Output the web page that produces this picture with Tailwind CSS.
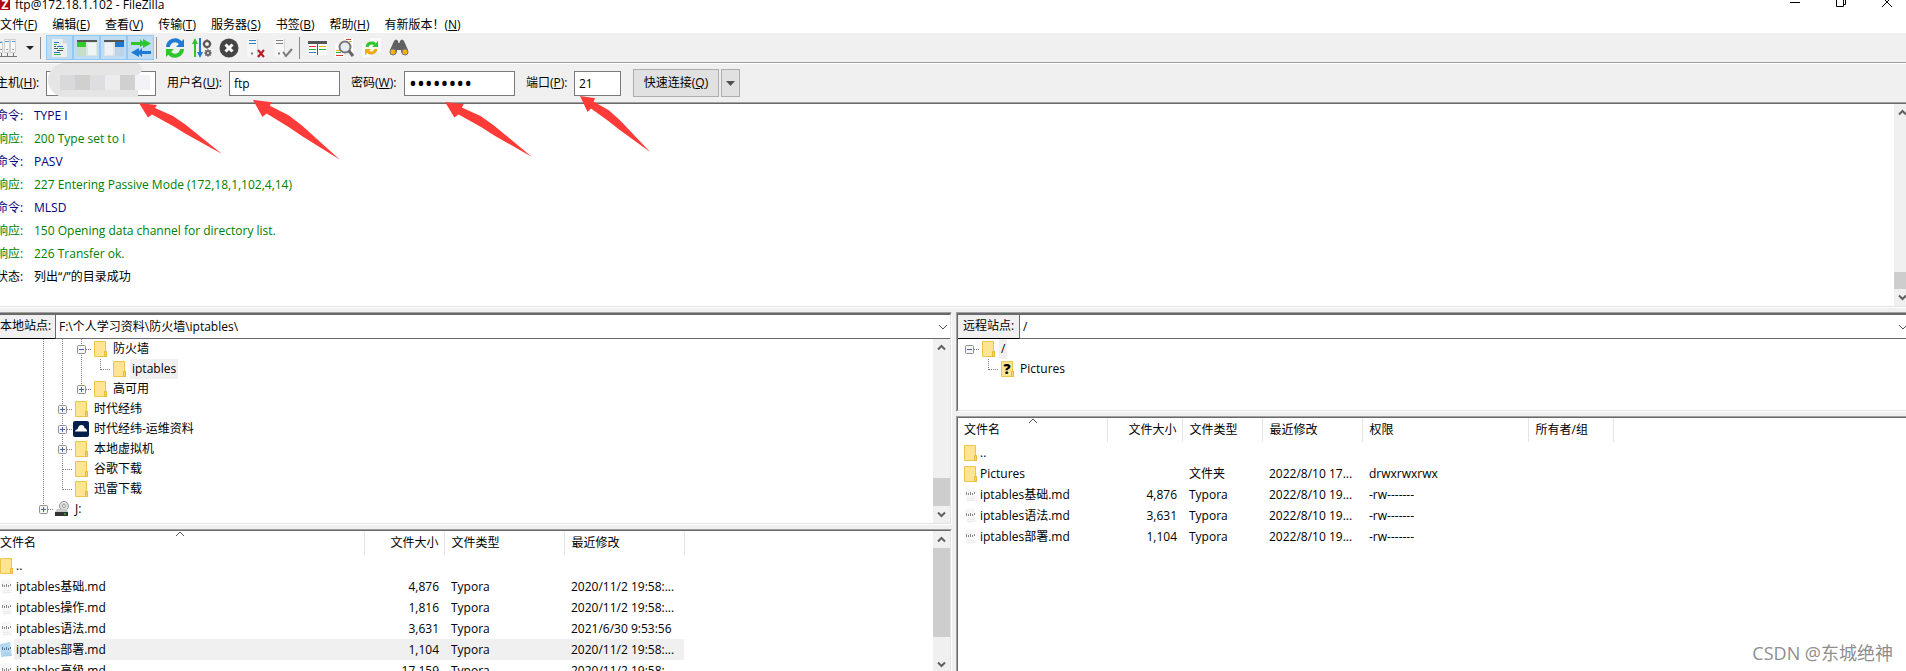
<!DOCTYPE html>
<html lang="zh-CN">

<head>
    <meta charset="UTF-8">
    <meta name="viewport" content="width=device-width, initial-scale=1.0">
    <title>ftp@172.18.1.102 - FileZilla</title>
    <script src="https://cdn.jsdelivr.net/npm/@tailwindcss/browser@4"></script>
</head>

<body class="h-screen overflow-hidden bg-white font-['Open_Sans','Noto_Sans_CJK_SC',sans-serif] text-[12px] leading-4 text-black">

    <!-- Shared icons -->
    <svg class="hidden">
        <symbol id="folder" viewBox="0 0 16 16">
            <path d="M2.500 .5h11v10h1v5h-12z" fill="#ffe493" stroke="#ecc54a" />
            <path d="M12.500 15.500v-5h2v5z" fill="#fbd768" stroke="#e8b93c" />
        </symbol>
        <symbol id="file" viewBox="0 0 16 16">
            <path d="M3 1l10-1 1 14-9 1z" fill="#f7f7f7" />
            <path d="M4.500 5v3M6.500 6v2M8.500 5v3M10.500 6v2M12.500 5v2" stroke="#8a8a8a" fill="none" />
            <path d="M5 11.500h7M5 13.500h8" stroke="#ececec" />
        </symbol>
        <symbol id="file-selected" viewBox="0 0 16 16">
            <path d="M2 2l10-2 2 14-11 1z" fill="#b4d8f0" />
            <path d="M4.500 5v3M6.500 6v2M8.500 5v3M10.500 6v2M12.500 5v2" stroke="#55789a" fill="none" />
            <path d="M5 11.500h7M5 13.500h8" stroke="#a2cce8" />
        </symbol>
        <symbol id="cloud" viewBox="0 0 16 16">
            <rect width="16" height="16" rx="2" fill="#04204a" />
            <path d="M2 10.500q0-2 2.500-2.200Q5.500 4 8.500 4q2.500 0 3 3 2.500.5 2.500 3.500z" fill="#fff" />
        </symbol>
        <symbol id="drive" viewBox="0 0 16 16">
            <circle cx="10" cy="5" r="4.500" fill="#dcdcdc" stroke="#999" />
            <circle cx="10" cy="5" r="1.500" fill="#fff" stroke="#999" />
            <path d="M3 8h10l1 3H1z" fill="#c9c9c9" />
            <path d="M1 11h13v4H1z" fill="#333" />
            <path d="M10 13h2" stroke="#3fe03f" />
        </symbol>
        <symbol id="line" viewBox="0 0 19 20">
            <path d="M9.500 0v20" stroke="#808080" stroke-dasharray="1 1" />
        </symbol>
        <symbol id="tee" viewBox="0 0 19 20">
            <path d="M9.500 0v20M10 10.500h9" stroke="#808080" stroke-dasharray="1 1" fill="none" />
        </symbol>
        <symbol id="end" viewBox="0 0 19 20">
            <path d="M9.500 0v11M10 10.500h9" stroke="#808080" stroke-dasharray="1 1" fill="none" />
        </symbol>
        <symbol id="minus" viewBox="0 0 19 20">
            <path d="M14 10.500h5" stroke="#808080" stroke-dasharray="1 1" />
            <rect x="5.500" y="6.500" width="8" height="8" rx="1" fill="#f5f5f5" stroke="#919191" />
            <path d="M7 10.500h5" stroke="#4b63a7" />
        </symbol>
        <symbol id="plus" viewBox="0 0 19 20">
            <path d="M14 10.500h5" stroke="#808080" stroke-dasharray="1 1" />
            <rect x="5.500" y="6.500" width="8" height="8" rx="1" fill="#f5f5f5" stroke="#919191" />
            <path d="M7 10.500h5M9.500 8v5" stroke="#4b63a7" />
        </symbol>
        <symbol id="up" viewBox="0 0 17 17">
            <path d="M5 10.500l3.500-3.500 3.500 3.500" stroke="#606060" stroke-width="2" fill="none" />
        </symbol>
        <symbol id="down" viewBox="0 0 17 17">
            <path d="M5 6.500l3.500 3.500 3.500-3.500" stroke="#606060" stroke-width="2" fill="none" />
        </symbol>
        <symbol id="caret" viewBox="0 0 10 6">
            <path d="M1 1l4 4 4-4" stroke="#555" fill="none" />
        </symbol>
        <symbol id="arrow" viewBox="0 0 84 52" preserveAspectRatio="none">
            <path d="M0 0L18 2l-2 3 18 8 13 9 36 29-36-20-13-8-21-11.500-4 3z" fill="#fe3b38" />
        </symbol>
    </svg>

    <div class="-mt-[3px] -mr-[5px] flex h-[calc(100vh+5px)] flex-col bg-[#f0f0f0]">

        <!-- Title bar -->
        <header class="flex h-[17px] shrink-0 items-start justify-between bg-white">
            <div class="flex items-start">
                <span class="h-[13px] w-[10px] bg-[#b00610] text-center text-[12px] leading-[15px] font-bold text-white">Z</span>
                <h1 class="pl-[5px] leading-4">ftp@172.18.1.102 - FileZilla</h1>
            </div>
            <div class="flex gap-[34px] pr-[18px]">
                <button aria-label="最小化"><svg class="h-3 w-3" viewBox="0 0 12 12"><path d="M1 5.500h10" stroke="#000" /></svg></button>
                <button aria-label="还原"><svg class="h-3 w-3" viewBox="0 0 12 12"><path d="M1.500 1.500h7v8h-7zM10.500 0v7.500h-2" stroke="#000" fill="none" /></svg></button>
                <button aria-label="关闭"><svg class="h-3 w-3" viewBox="0 0 12 12"><path d="M1 0l10 10M11 0L1 10" stroke="#000" fill="none" /></svg></button>
            </div>
        </header>

        <!-- Menu -->
        <nav class="flex h-[19px] shrink-0 items-center gap-[15px] bg-white pt-[3px]">
            <button>文件(<u>F</u>)</button>
            <button>编辑(<u>E</u>)</button>
            <button>查看(<u>V</u>)</button>
            <button>传输(<u>T</u>)</button>
            <button>服务器(<u>S</u>)</button>
            <button>书签(<u>B</u>)</button>
            <button>帮助(<u>H</u>)</button>
            <button>有新版本！(<u>N</u>)</button>
        </nav>

        <!-- Toolbar -->
        <div class="flex h-[30px] shrink-0 items-center border-b border-[#a0a0a0]">
            <button class="flex items-center gap-2" aria-label="站点管理器">
                <svg class="h-5 w-[18px]" viewBox="0 0 18 20">
                    <path d="M-2.500 3.500h5v11h-5zM4.500 1.500h5v13h-5zM10.500 1.500h5v13h-5z" fill="#f8f8f8" stroke="#cfcfcf" />
                    <path d="M0 4.500h2M5 3.500h4M12 3.500h3" stroke="#4a9ee0" />
                    <path d="M0 11.500h2M6 11.500h2M12 11.500h2" stroke="#999" />
                    <path d="M1.500 15v3M7.500 15v3M13.500 15v3M0 18.500h17" stroke="#777" />
                </svg>
                <svg class="h-1 w-2" viewBox="0 0 8 4"><path d="M0 0h8L4 4z" fill="#222" /></svg>
            </button>
            <span class="mr-[5px] ml-[6px] h-[22px] w-px bg-[#8a8a8a]"></span>
            <div class="flex">
                <button class="flex h-[25px] w-[27px] items-center justify-center border border-[#90c8f6] bg-[#c0dcf3]" aria-label="消息日志">
                    <svg class="h-5 w-5" viewBox="0 0 20 20">
                        <path d="M2 1h11l4 4v14H2z" fill="#eceff1" />
                        <path d="M13 1v4h4z" fill="#cfd6da" />
                        <path d="M4 4.500h5M7 8.500h6M4 14.500h6" stroke="#1a78c8" />
                        <path d="M4 6.500h3M9 10.500h5M4 16.500h7" stroke="#36b34a" />
                        <path d="M4 8.500h2M4 10.500h4M7 12.500h6" stroke="#555" />
                    </svg>
                </button>
                <button class="flex h-[25px] w-[27px] items-center justify-center border border-[#90c8f6] bg-[#c0dcf3]" aria-label="本地目录树">
                    <svg class="h-5 w-5" viewBox="0 0 20 20">
                        <path d="M0 2h20v16H0z" fill="#dce8e2" />
                        <path d="M0 2h20v2H0z" fill="#555" />
                        <path d="M0 4h9v5H0z" fill="#2fcc2f" />
                        <path d="M0 9h9v9H0z" fill="#c5dec8" />
                        <path d="M11 5h8v12h-8z" fill="#f0f4f4" />
                    </svg>
                </button>
                <button class="flex h-[25px] w-[27px] items-center justify-center border border-[#90c8f6] bg-[#c0dcf3]" aria-label="远程目录树">
                    <svg class="h-5 w-5" viewBox="0 0 20 20">
                        <path d="M0 2h20v16H0z" fill="#dce4ea" />
                        <path d="M0 2h20v2H0z" fill="#555" />
                        <path d="M11 4h9v5h-9z" fill="#1d78cf" />
                        <path d="M11 9h9v9h-9z" fill="#bed2e8" />
                        <path d="M1 5h8v12H1z" fill="#eef2f5" />
                    </svg>
                </button>
                <button class="flex h-[25px] w-[27px] items-center justify-center border border-[#90c8f6] bg-[#c0dcf3]" aria-label="传输队列">
                    <svg class="h-5 w-5" viewBox="0 0 20 20">
                        <path d="M0 4h9V1l3 3V1l8 4.500-8 4.500V7L9 9V7H0z" fill="#2dc62d" />
                        <path d="M20 13h-9v-3l-3 3v-3l-8 4.500L8 19v-3l3 3v-3h9z" fill="#1d7bd6" />
                    </svg>
                </button>
            </div>
            <span class="mr-2 ml-[2px] h-[22px] w-px bg-[#8a8a8a]"></span>
            <div class="flex gap-[7px]">
                <button aria-label="刷新">
                    <svg class="h-5 w-5" viewBox="0 0 20 20">
                        <path d="M3 9a7 7 0 0 1 12.500-4" stroke="#1d7bd6" stroke-width="4" fill="none" />
                        <path d="M19 1v8h-8z" fill="#1d7bd6" />
                        <path d="M17 11A7 7 0 0 1 4.500 15" stroke="#2dc62d" stroke-width="4" fill="none" />
                        <path d="M1 19v-8h8z" fill="#2dc62d" />
                    </svg>
                </button>
                <button aria-label="处理队列">
                    <svg class="h-5 w-5" viewBox="0 0 20 20">
                        <path d="M3 19V4" stroke="#2dc62d" stroke-width="2" />
                        <path d="M0 6l3-6 3 6z" fill="#2dc62d" />
                        <path d="M8 0v16" stroke="#1d7bd6" stroke-width="2" />
                        <path d="M5 14l3 6 3-6z" fill="#1d7bd6" />
                        <circle cx="15" cy="6" r="3" fill="none" stroke="#555" stroke-width="2" />
                        <path d="M15 1v10M10.500 6h9M12 3l6 6M18 3l-6 6" stroke="#555" stroke-dasharray="2 5 3" />
                        <circle cx="16" cy="15" r="2" fill="none" stroke="#666" stroke-width="2" />
                        <path d="M16 11v8M12 15h8M13 12l6 6M19 12l-6 6" stroke="#666" stroke-dasharray="2 4 2" />
                    </svg>
                </button>
                <button aria-label="取消">
                    <svg class="h-5 w-5" viewBox="0 0 20 20">
                        <circle cx="10" cy="10" r="9.500" fill="#454545" />
                        <path d="M6.500 6.500l7 7M13.500 6.500l-7 7" stroke="#fff" stroke-width="3" />
                    </svg>
                </button>
                <button aria-label="断开连接">
                    <svg class="h-5 w-5" viewBox="0 0 20 20">
                        <path d="M1 1h10v18H1z" fill="#f6f6f6" />
                        <path d="M11.500 1v18" stroke="#d6d6d6" />
                        <path d="M3 2.500h7M3 5.500h7" stroke="#2d7fd0" />
                        <path d="M5 15.500h2" stroke="#777" stroke-width="2" />
                        <path d="M12 12l6 7M18 12l-6 7" stroke="#b81822" stroke-width="2" />
                    </svg>
                </button>
                <button aria-label="重新连接">
                    <svg class="h-5 w-5" viewBox="0 0 20 20">
                        <path d="M1 1h10v18H1z" fill="#f6f6f6" />
                        <path d="M11.500 1v18" stroke="#d6d6d6" />
                        <path d="M3 2.500h7M3 5.500h7" stroke="#808080" />
                        <path d="M5 15.500h2" stroke="#808080" stroke-width="2" />
                        <path d="M10 14l3 4 6-7" stroke="#7c7c7c" stroke-width="2" fill="none" />
                    </svg>
                </button>
            </div>
            <span class="mr-2 ml-[6px] h-[22px] w-px bg-[#8a8a8a]"></span>
            <div class="flex gap-[7px]">
                <button aria-label="目录列表过滤器">
                    <svg class="h-5 w-5" viewBox="0 0 20 20">
                        <path d="M1 4h18v13H1z" fill="#fff" />
                        <path d="M0 3h19v3H0z" fill="#555" />
                        <path d="M1 8.500h7" stroke="#e0342c" />
                        <path d="M1 11.500h7M11 11.500h7" stroke="#26b326" />
                        <path d="M11 8.500h7" stroke="#f0b000" />
                        <path d="M1 14.500h7" stroke="#2d7fd0" />
                        <path d="M9.500 6v11" stroke="#555" />
                    </svg>
                </button>
                <button aria-label="目录对比">
                    <svg class="h-5 w-5" viewBox="0 0 20 20">
                        <path d="M9 0h9v14H9zM0 6h9v13H0z" fill="#fff" />
                        <path d="M11 1.500h5" stroke="#d8342c" />
                        <path d="M14 3.500h3" stroke="#e8b000" />
                        <path d="M1 12.500h4" stroke="#e8b000" />
                        <path d="M1 14.500h5" stroke="#2faf2f" />
                        <path d="M1 17.500h7" stroke="#e0342c" />
                        <circle cx="10" cy="9" r="5.500" fill="#e6edf0" stroke="#777" stroke-width="2" />
                        <path d="M14 13l4 5" stroke="#666" stroke-width="3" />
                    </svg>
                </button>
                <button aria-label="同步浏览">
                    <svg class="h-5 w-5" viewBox="0 0 20 20">
                        <path d="M8 0h11v14H8zM0 6h9v13H0z" fill="#fafafa" />
                        <path d="M5 9a5 5 0 0 1 8-3" stroke="#2dc62d" stroke-width="3" fill="none" />
                        <path d="M16 3v6h-6z" fill="#2dc62d" />
                        <path d="M14 11a5 5 0 0 1-8 3" stroke="#f3a80c" stroke-width="3" fill="none" />
                        <path d="M3 17v-6h6z" fill="#f3a80c" />
                    </svg>
                </button>
                <button aria-label="查找文件">
                    <svg class="h-5 w-5" viewBox="0 0 20 20">
                        <path d="M5 3q2-3 4 0l.5 2h1L11 3q2-3 4 0l4 9q1 5-3 5-4 0-4-5h-4q0 5-4 5-4 0-3-5z" fill="#606060" />
                        <circle cx="4" cy="14" r="3" fill="#f7b212" stroke="#777" />
                        <circle cx="16" cy="14" r="3" fill="#f7b212" stroke="#777" />
                    </svg>
                </button>
            </div>
        </div>

        <!-- Quickconnect -->
        <form class="flex h-[39px] shrink-0 items-center border-t border-white">
            <label for="host" class="-ml-1 w-[50px] shrink-0">主机(<u>H</u>):</label>
            <div class="relative">
                <input id="host" type="text" class="block h-[25px] w-[110px] border border-[#7a7a7a] bg-white px-1">
                <!-- hidden host name -->
                <div class="absolute -top-2 left-[2px] h-[34px] w-[90px] rounded-l-full rounded-br-2xl bg-[#e5e5e5]">
                    <div class="absolute top-0 left-4 h-3 w-[78px] rounded-r-full bg-[#e5e5e5]"></div>
                    <div class="absolute top-3 left-3 flex">
                        <i class="h-[15px] w-[15px] bg-[#d9d9dc]"></i>
                        <i class="h-[15px] w-[15px] bg-[#d2d0cf]"></i>
                        <i class="h-[15px] w-[15px] bg-[#dedee0]"></i>
                        <i class="h-[15px] w-[15px] bg-[#ececef]"></i>
                        <i class="h-[15px] w-[15px] bg-[#d0d0d1]"></i>
                        <i class="h-[15px] w-[15px] bg-[#f2f3f7]"></i>
                    </div>
                </div>
            </div>
            <label for="user" class="ml-[11px] w-[62px] shrink-0">用户名(<u>U</u>):</label>
            <input id="user" type="text" value="ftp" class="h-[25px] w-[111px] border border-[#7a7a7a] bg-white px-1">
            <label for="pass" class="ml-[11px] w-[53px] shrink-0">密码(<u>W</u>):</label>
            <input id="pass" type="password" value="password" class="h-[25px] w-[111px] border border-[#7a7a7a] bg-white px-1 text-[21px]">
            <label for="port" class="ml-[11px] w-[48px] shrink-0">端口(<u>P</u>):</label>
            <input id="port" type="text" value="21" class="h-[25px] w-[47px] border border-[#7a7a7a] bg-white px-1">
            <button type="button" class="ml-3 h-[28px] w-[86px] border border-[#adadad] bg-[#e1e1e1]">快速连接(<u>Q</u>)</button>
            <button type="button" class="ml-[2px] flex h-[28px] w-[19px] items-center justify-center border border-[#adadad] bg-[#e1e1e1]" aria-label="历史">
                <svg class="h-[5px] w-[9px]" viewBox="0 0 9 5"><path d="M0 0h9L4.500 5z" fill="#505050" /></svg>
            </button>
        </form>

        <!-- Message log -->
        <section class="flex shrink-0 border-t border-b border-t-[#a0a0a0] border-b-white">
            <div class="flex flex-1 border-t border-b border-t-[#696969] border-b-[#e3e3e3] bg-white">
                <div class="-ml-1 flex-1 pb-[18px] leading-[23px]">
                    <p class="flex text-[#000080]"><span class="w-[38px]">命令:</span>TYPE I</p>
                    <p class="flex text-[#008000]"><span class="w-[38px]">响应:</span>200 Type set to I</p>
                    <p class="flex text-[#000080]"><span class="w-[38px]">命令:</span>PASV</p>
                    <p class="flex text-[#008000]"><span class="w-[38px]">响应:</span>227 Entering Passive Mode (172,18,1,102,4,14)</p>
                    <p class="flex text-[#000080]"><span class="w-[38px]">命令:</span>MLSD</p>
                    <p class="flex text-[#008000]"><span class="w-[38px]">响应:</span>150 Opening data channel for directory list.</p>
                    <p class="flex text-[#008000]"><span class="w-[38px]">响应:</span>226 Transfer ok.</p>
                    <p class="flex"><span class="w-[38px]">状态:</span>列出“/”的目录成功</p>
                </div>
                <div class="flex w-[17px] flex-col justify-between bg-[#f0f0f0]">
                    <svg class="h-[17px] w-[17px]"><use href="#up" /></svg>
                    <div>
                        <div class="h-[17px] bg-[#cdcdcd]"></div>
                        <svg class="h-[17px] w-[17px]"><use href="#down" /></svg>
                    </div>
                </div>
            </div>
        </section>

        <main class="mt-1 grid min-h-0 flex-1 grid-cols-[952fr_955fr] gap-1">

            <!-- Local site -->
            <section class="flex min-h-0 flex-col gap-1">
                <div class="border-t border-r border-b border-t-[#a0a0a0] border-r-white border-b-white">
                    <div class="border-t-2 border-r border-b border-t-[#696969] border-r-[#e3e3e3] border-b-[#e3e3e3] bg-white">
                        <div class="flex h-6">
                            <label for="local" class="w-14 border-r border-b border-r-[#696969] border-b-black bg-[#f0f0f0] leading-[22px]">本地站点:</label>
                            <div class="relative flex-1 border-b border-[#696969]">
                                <select id="local" class="h-full w-full appearance-none pl-[3px]">
                                    <option>F:\个人学习资料\防火墙\iptables\</option>
                                </select>
                                <svg class="pointer-events-none absolute top-[9px] right-[2px] h-[6px] w-[10px]"><use href="#caret" /></svg>
                            </div>
                        </div>
                        <div class="flex h-[184px] overflow-hidden">
                            <ul class="flex-1 pl-[34px] leading-5">
                                <li class="flex items-center">
                                    <svg class="h-5 w-[19px]"><use href="#line" /></svg>
                                    <svg class="h-5 w-[19px]"><use href="#line" /></svg>
                                    <svg class="h-5 w-[19px]"><use href="#line" /><use href="#minus" /></svg>
                                    <svg class="mr-[3px] ml-px h-4 w-4"><use href="#folder" /></svg>
                                    <span class="px-[2px]">防火墙</span>
                                </li>
                                <li class="flex items-center">
                                    <svg class="h-5 w-[19px]"><use href="#line" /></svg>
                                    <svg class="h-5 w-[19px]"><use href="#line" /></svg>
                                    <svg class="h-5 w-[19px]"><use href="#line" /></svg>
                                    <svg class="h-5 w-[19px]"><use href="#end" /></svg>
                                    <svg class="mr-[3px] ml-px h-4 w-4"><use href="#folder" /></svg>
                                    <span class="bg-[#f0f0f0] px-[2px]">iptables</span>
                                </li>
                                <li class="flex items-center">
                                    <svg class="h-5 w-[19px]"><use href="#line" /></svg>
                                    <svg class="h-5 w-[19px]"><use href="#line" /></svg>
                                    <svg class="h-5 w-[19px]"><use href="#end" /><use href="#plus" /></svg>
                                    <svg class="mr-[3px] ml-px h-4 w-4"><use href="#folder" /></svg>
                                    <span class="px-[2px]">高可用</span>
                                </li>
                                <li class="flex items-center">
                                    <svg class="h-5 w-[19px]"><use href="#line" /></svg>
                                    <svg class="h-5 w-[19px]"><use href="#line" /><use href="#plus" /></svg>
                                    <svg class="mr-[3px] ml-px h-4 w-4"><use href="#folder" /></svg>
                                    <span class="px-[2px]">时代经纬</span>
                                </li>
                                <li class="flex items-center">
                                    <svg class="h-5 w-[19px]"><use href="#line" /></svg>
                                    <svg class="h-5 w-[19px]"><use href="#line" /><use href="#plus" /></svg>
                                    <svg class="mr-[3px] ml-px h-4 w-4"><use href="#cloud" /></svg>
                                    <span class="px-[2px]">时代经纬-运维资料</span>
                                </li>
                                <li class="flex items-center">
                                    <svg class="h-5 w-[19px]"><use href="#line" /></svg>
                                    <svg class="h-5 w-[19px]"><use href="#line" /><use href="#plus" /></svg>
                                    <svg class="mr-[3px] ml-px h-4 w-4"><use href="#folder" /></svg>
                                    <span class="px-[2px]">本地虚拟机</span>
                                </li>
                                <li class="flex items-center">
                                    <svg class="h-5 w-[19px]"><use href="#line" /></svg>
                                    <svg class="h-5 w-[19px]"><use href="#tee" /></svg>
                                    <svg class="mr-[3px] ml-px h-4 w-4"><use href="#folder" /></svg>
                                    <span class="px-[2px]">谷歌下载</span>
                                </li>
                                <li class="flex items-center">
                                    <svg class="h-5 w-[19px]"><use href="#line" /></svg>
                                    <svg class="h-5 w-[19px]"><use href="#end" /></svg>
                                    <svg class="mr-[3px] ml-px h-4 w-4"><use href="#folder" /></svg>
                                    <span class="px-[2px]">迅雷下载</span>
                                </li>
                                <li class="flex items-center">
                                    <svg class="h-5 w-[19px]"><use href="#end" /><use href="#plus" /></svg>
                                    <svg class="mr-[3px] ml-px h-4 w-4"><use href="#drive" /></svg>
                                    <span class="px-[2px]">J:</span>
                                </li>
                            </ul>
                            <div class="flex w-[17px] flex-col justify-between bg-[#f0f0f0]">
                                <svg class="h-[17px] w-[17px]"><use href="#up" /></svg>
                                <div>
                                    <div class="h-7 bg-[#cdcdcd]"></div>
                                    <svg class="h-[17px] w-[17px]"><use href="#down" /></svg>
                                </div>
                            </div>
                        </div>
                    </div>
                </div>

                <div class="flex min-h-0 flex-1 border-t border-r border-t-[#a0a0a0] border-r-white">
                    <div class="flex min-h-0 flex-1 border-t border-r border-t-[#696969] border-r-[#e3e3e3] bg-white">
                        <div class="flex-1 overflow-hidden">
                            <table class="w-[684px] table-fixed">
                                <colgroup>
                                    <col class="w-[364px]">
                                    <col class="w-[80px]">
                                    <col class="w-[120px]">
                                    <col class="w-[120px]">
                                </colgroup>
                                <thead>
                                    <tr class="h-6 text-left">
                                        <th class="relative border-r border-[#e5e5e5] font-normal">
                                            文件名
                                            <svg class="absolute top-0 left-[175px] h-[6px] w-[10px] rotate-180"><use href="#caret" /></svg>
                                        </th>
                                        <th class="border-r border-[#e5e5e5] pr-[5px] text-right font-normal">文件大小</th>
                                        <th class="border-r border-[#e5e5e5] pl-[7px] font-normal">文件类型</th>
                                        <th class="border-r border-[#e5e5e5] pl-[7px] font-normal">最近修改</th>
                                    </tr>
                                </thead>
                                <tbody>
                                    <tr class="h-[21px]">
                                        <td><div class="flex items-center"><svg class="-ml-[2px] mr-[2px] h-4 w-4"><use href="#folder" /></svg>..</div></td>
                                        <td></td>
                                        <td></td>
                                        <td></td>
                                    </tr>
                                    <tr class="h-[21px]">
                                        <td><div class="flex items-center"><svg class="-ml-[2px] mr-[2px] h-4 w-4"><use href="#file" /></svg>iptables基础.md</div></td>
                                        <td class="pr-[5px] text-right">4,876</td>
                                        <td class="pl-[7px]">Typora</td>
                                        <td class="pl-[7px]">2020/11/2 19:58:...</td>
                                    </tr>
                                    <tr class="h-[21px]">
                                        <td><div class="flex items-center"><svg class="-ml-[2px] mr-[2px] h-4 w-4"><use href="#file" /></svg>iptables操作.md</div></td>
                                        <td class="pr-[5px] text-right">1,816</td>
                                        <td class="pl-[7px]">Typora</td>
                                        <td class="pl-[7px]">2020/11/2 19:58:...</td>
                                    </tr>
                                    <tr class="h-[21px]">
                                        <td><div class="flex items-center"><svg class="-ml-[2px] mr-[2px] h-4 w-4"><use href="#file" /></svg>iptables语法.md</div></td>
                                        <td class="pr-[5px] text-right">3,631</td>
                                        <td class="pl-[7px]">Typora</td>
                                        <td class="pl-[7px]">2021/6/30 9:53:56</td>
                                    </tr>
                                    <tr class="h-[21px] bg-[#f0f0f0]">
                                        <td>
                                            <div class="flex h-[21px] items-center">
                                                <span class="flex h-full w-[14px] items-center bg-white"><svg class="-ml-[2px] h-4 w-4 shrink-0"><use href="#file-selected" /></svg></span>
                                                <span class="pl-[2px]">iptables部署.md</span>
                                            </div>
                                        </td>
                                        <td class="pr-[5px] text-right">1,104</td>
                                        <td class="pl-[7px]">Typora</td>
                                        <td class="pl-[7px]">2020/11/2 19:58:...</td>
                                    </tr>
                                    <tr class="h-[21px]">
                                        <td><div class="flex items-center"><svg class="-ml-[2px] mr-[2px] h-4 w-4"><use href="#file" /></svg>iptables高级.md</div></td>
                                        <td class="pr-[5px] text-right">17,159</td>
                                        <td class="pl-[7px]">Typora</td>
                                        <td class="pl-[7px]">2020/11/2 19:58:...</td>
                                    </tr>
                                </tbody>
                            </table>
                        </div>
                        <div class="flex w-[17px] flex-col justify-between bg-[#f0f0f0]">
                            <div>
                                <svg class="h-[17px] w-[17px]"><use href="#up" /></svg>
                                <div class="h-[89px] bg-[#cdcdcd]"></div>
                            </div>
                            <svg class="h-[17px] w-[17px]"><use href="#down" /></svg>
                        </div>
                    </div>
                </div>
            </section>

            <!-- Remote site -->
            <section class="flex min-h-0 flex-col gap-1">
                <div class="border-t border-b border-l border-t-[#a0a0a0] border-b-white border-l-[#a0a0a0]">
                    <div class="border-t-2 border-b border-l border-t-[#696969] border-b-[#e3e3e3] border-l-[#696969] bg-white">
                        <div class="flex h-6">
                            <label for="remote" class="w-[62px] border-r border-b border-r-[#696969] border-b-black bg-[#f0f0f0] pl-[5px] leading-[22px]">远程站点:</label>
                            <div class="relative flex-1 border-b border-[#696969]">
                                <select id="remote" class="h-full w-full appearance-none pl-[3px]">
                                    <option>/</option>
                                </select>
                                <svg class="pointer-events-none absolute top-[9px] right-[3px] h-[6px] w-[10px]"><use href="#caret" /></svg>
                            </div>
                        </div>
                        <ul class="h-[71px] pl-[2px] leading-5">
                            <li class="flex items-center">
                                <svg class="h-5 w-[19px]"><use href="#minus" /></svg>
                                <svg class="mr-[3px] ml-px h-4 w-4"><use href="#folder" /></svg>
                                <span class="bg-[#f0f0f0] px-[2px]">/</span>
                            </li>
                            <li class="flex items-center pl-[19px]">
                                <svg class="h-5 w-[19px]"><use href="#end" /></svg>
                                <span class="relative mr-[3px] ml-px h-4 w-4 text-center text-[14px] leading-4 font-extrabold">
                                    <svg class="absolute inset-0 h-4 w-4"><use href="#folder" /></svg>
                                    <span class="relative">?</span>
                                </span>
                                <span class="px-[2px]">Pictures</span>
                            </li>
                        </ul>
                    </div>
                </div>

                <div class="flex min-h-0 flex-1 border-t border-l border-[#a0a0a0]">
                    <div class="min-h-0 flex-1 overflow-hidden border-t border-l border-[#696969] bg-white">
                        <table class="w-[655px] table-fixed">
                            <colgroup>
                                <col class="w-[149px]">
                                <col class="w-[75px]">
                                <col class="w-[80px]">
                                <col class="w-[100px]">
                                <col class="w-[166px]">
                                <col class="w-[85px]">
                            </colgroup>
                            <thead>
                                <tr class="h-6 text-left">
                                    <th class="relative border-r border-[#e5e5e5] pl-[6px] font-normal">
                                        文件名
                                        <svg class="absolute top-0 left-[70px] h-[6px] w-[10px] rotate-180"><use href="#caret" /></svg>
                                    </th>
                                    <th class="border-r border-[#e5e5e5] pr-[5px] text-right font-normal">文件大小</th>
                                    <th class="border-r border-[#e5e5e5] pl-[7px] font-normal">文件类型</th>
                                    <th class="border-r border-[#e5e5e5] pl-[7px] font-normal">最近修改</th>
                                    <th class="border-r border-[#e5e5e5] pl-[7px] font-normal">权限</th>
                                    <th class="border-r border-[#e5e5e5] pl-[7px] font-normal">所有者/组</th>
                                </tr>
                            </thead>
                            <tbody>
                                <tr class="h-[21px]">
                                    <td class="pl-1"><div class="flex items-center gap-[2px]"><svg class="h-4 w-4"><use href="#folder" /></svg>..</div></td>
                                    <td></td>
                                    <td></td>
                                    <td></td>
                                    <td></td>
                                    <td></td>
                                </tr>
                                <tr class="h-[21px]">
                                    <td class="pl-1"><div class="flex items-center gap-[2px]"><svg class="h-4 w-4"><use href="#folder" /></svg>Pictures</div></td>
                                    <td></td>
                                    <td class="pl-[7px]">文件夹</td>
                                    <td class="pl-[7px]">2022/8/10 17...</td>
                                    <td class="pl-[7px]">drwxrwxrwx</td>
                                    <td></td>
                                </tr>
                                <tr class="h-[21px]">
                                    <td class="pl-1"><div class="flex items-center gap-[2px]"><svg class="h-4 w-4"><use href="#file" /></svg>iptables基础.md</div></td>
                                    <td class="pr-[5px] text-right">4,876</td>
                                    <td class="pl-[7px]">Typora</td>
                                    <td class="pl-[7px]">2022/8/10 19...</td>
                                    <td class="pl-[7px]">-rw-------</td>
                                    <td></td>
                                </tr>
                                <tr class="h-[21px]">
                                    <td class="pl-1"><div class="flex items-center gap-[2px]"><svg class="h-4 w-4"><use href="#file" /></svg>iptables语法.md</div></td>
                                    <td class="pr-[5px] text-right">3,631</td>
                                    <td class="pl-[7px]">Typora</td>
                                    <td class="pl-[7px]">2022/8/10 19...</td>
                                    <td class="pl-[7px]">-rw-------</td>
                                    <td></td>
                                </tr>
                                <tr class="h-[21px]">
                                    <td class="pl-1"><div class="flex items-center gap-[2px]"><svg class="h-4 w-4"><use href="#file" /></svg>iptables部署.md</div></td>
                                    <td class="pr-[5px] text-right">1,104</td>
                                    <td class="pl-[7px]">Typora</td>
                                    <td class="pl-[7px]">2022/8/10 19...</td>
                                    <td class="pl-[7px]">-rw-------</td>
                                    <td></td>
                                </tr>
                            </tbody>
                        </table>
                    </div>
                </div>
            </section>
        </main>
    </div>

    <!-- Annotation arrows -->
    <svg class="pointer-events-none absolute top-[103px] left-[139px] h-[52px] w-[84px]"><use href="#arrow" /></svg>
    <svg class="pointer-events-none absolute top-[100px] left-[253px] h-[61px] w-[88px]"><use href="#arrow" /></svg>
    <svg class="pointer-events-none absolute top-[102px] left-[445px] h-[56px] w-[88px]"><use href="#arrow" /></svg>
    <svg class="pointer-events-none absolute top-[96px] left-[580px] h-[57px] w-[71px]"><use href="#arrow" /></svg>

    <p class="absolute right-[13px] bottom-[6px] text-[18px] leading-6 text-[#8e8e8e]">CSDN @东城绝神</p>
</body>

</html>
